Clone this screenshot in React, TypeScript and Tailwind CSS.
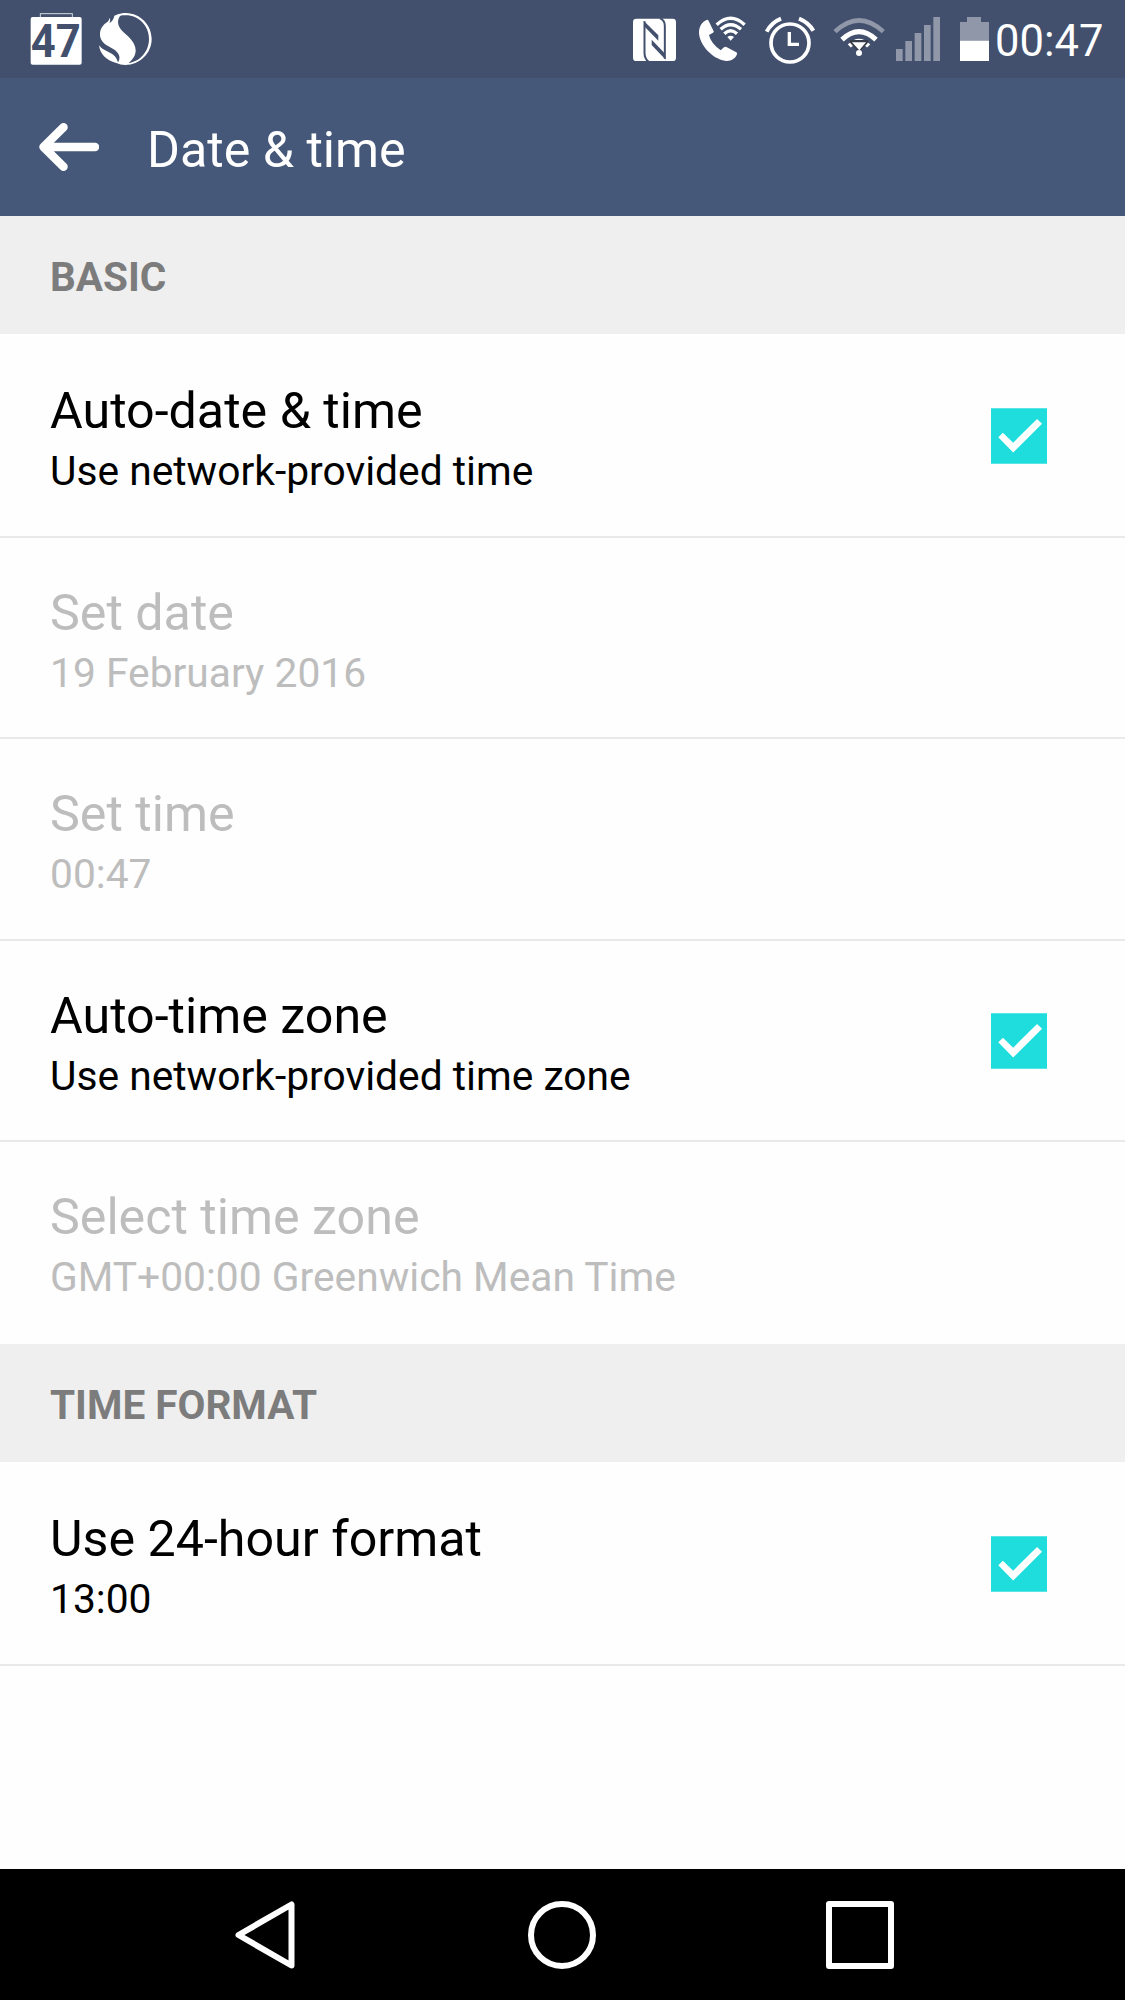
import type { ReactNode } from "react";

const FAINT = "#9097a9";
const BAR = "#42506d";

function Glyph({ x, w, className, children }: { x: number; w: number; className: string; children: ReactNode }) {
  return (
    <svg viewBox={`${x} 0 ${w} 234`} className={`h-[78px] shrink-0 ${className}`} fill="#fff">
      {children}
    </svg>
  );
}

function StatusBar() {
  return (
    <div className="flex h-[78px] items-center bg-[#42506d] pl-[28px]">
      <Glyph x={84} w={168} className="w-[56px]">
        <rect x="121" y="41" width="96" height="14" fill="none" stroke="#d5d9e1" strokeWidth="3" />
        <rect x="92" y="51" width="153" height="143" rx="6" />
        <text x="92" y="172" fontFamily="Roboto" fontWeight="700" fontSize="140" textLength="150" lengthAdjust="spacingAndGlyphs" fill={BAR}>
          47
        </text>
      </Glyph>
      <Glyph x={294} w={162} className="ml-[14px] w-[54px]">
        <path d="M343 47C358 40 370 39 378 39C421 40 455 75 455 117C455 160 419 195 376 195C365 195 358 193 349 189C317 181 300 161 297 136C313 158 346 155 354 187C363 172 357 163 350 155C337 141 313 139 303 118C295 96 304 78 319 68C325 64 328 58 329 53C332 61 330 66 328 70C335 65 342 57 343 47Z" />
        <path d="M360 48C348 66 356 83 370 96C390 113 407 131 407 151C407 168 397 180 386 189C419 185 447 155 447 117C447 77 415 46 378 46C370 46 365 46 360 48Z" fill={BAR} />
      </Glyph>
      <div className="grow" />
      <Glyph x={30} w={150} className="w-[50px]">
        <rect x="39" y="56" width="129" height="127" rx="10" />
        <path d="M73.500 64V158Q73.500 176 85 184M120 55Q134.500 60 134.500 78V176" fill="none" stroke={BAR} strokeWidth="6" />
        <path d="M71 62L115 106V122L74 80Z" fill={BAR} />
        <path d="M137 179L95 135V119L134 160Z" fill={BAR} />
      </Glyph>
      <Glyph x={222} w={168} className="ml-[14px] w-[56px]">
        <path d="M260 60Q264 58 266 63L281 94Q282 97 279 98L267 105Q272 129 302 151L312 142Q315 139 319 141L349 157Q352 159 351 163C345 179 328 185 315 182C275 176 239 134 237 99C237 79 247 64 260 60Z" />
        <g fill="none" stroke="#fff" strokeWidth="10">
          <path d="M290 74Q332 35 374 74" />
          <path d="M302 88Q332 60 363 88" />
          <path d="M313 101Q332 83 351 101" />
        </g>
        <path d="M322 111Q332 103 342 111L332 122Z" />
      </Glyph>
      <Glyph x={426} w={168} className="ml-3 w-[56px]">
        <g fill="none" stroke="#fff">
          <circle cx="510" cy="129" r="57" strokeWidth="11" />
          <path d="M508 96V133H537" strokeWidth="10" />
          <path d="M440 95Q454 68 483 56M537 56Q566 68 580 92" strokeWidth="12" />
        </g>
      </Glyph>
      <Glyph x={126} w={162} className="ml-[14px] w-[54px]">
        <path d="M135 95Q207 27 280 95" fill="none" stroke={FAINT} strokeWidth="14" />
        <path d="M156 119Q207 71 258 119" fill="none" stroke="#fff" strokeWidth="15" />
        <path d="M178 138Q207 108 236 138" fill="none" stroke="#fff" strokeWidth="13" />
        <path d="M180 120H234L236 126L215 149H199L178 126Z" fill="#363c49" />
        <path d="M186 127H228L208 151Z" />
        <circle cx="207" cy="159" r="9" />
      </Glyph>
      <Glyph x={315} w={138} className="ml-[9px] w-[46px]">
        <g fill={FAINT}>
          <rect x="318" y="147" width="20" height="36" />
          <rect x="346" y="123" width="20" height="60" />
          <rect x="374" y="99" width="20" height="84" />
          <rect x="402" y="75" width="20" height="108" />
          <rect x="430" y="51" width="20" height="132" />
        </g>
      </Glyph>
      <Glyph x={60} w={87} className="ml-[19px] w-[29px]">
        <path d="M60 66H81V51H123V66H147V122H60Z" fill={FAINT} />
        <rect x="60" y="122" width="87" height="61" />
      </Glyph>
      <span className="ml-[6px] mr-[22px] mt-[5px] w-[108px] whitespace-nowrap text-[43.5px] leading-[60px] text-white">00:47</span>
    </div>
  );
}

function Section({ children }: { children: ReactNode }) {
  return (
    <h2 className="flex h-[118.5px] items-center bg-[#efefef] pl-[50px] pt-[4px] text-[40.5px] font-bold leading-[60px] text-[#7c7c7c]">
      {children}
    </h2>
  );
}

function Check() {
  return (
    <svg viewBox="92 84 169 168" className="h-14 w-14 shrink-0">
      <path d="M92 84H261V252H92Z" fill="#20dddd" />
      <path d="M114 172L128 158L159 188L231 117L246 131L159 218Z" fill="#fff" />
    </svg>
  );
}

type RowProps = { title: string; detail: string; checked?: boolean; disabled?: boolean; last?: boolean };

function Row({ title, detail, checked, disabled, last }: RowProps) {
  return (
    <div
      className={`flex h-[201.6px] items-start justify-between pl-[50px] pr-[78px] pt-[45px] ${last ? "" : "border-b-2 border-[#e9e9e9]"} ${disabled ? "text-[#bdbdbd]" : "text-black"}`}
    >
      <div className="whitespace-nowrap">
        <div className="text-[50.2px] leading-[60px]">{title}</div>
        <div className="text-[40.75px] leading-[60px]">{detail}</div>
      </div>
      {checked && (
        <div className="mt-[27px]">
          <Check />
        </div>
      )}
    </div>
  );
}

export default function App() {
  return (
    <div className="flex h-[2000px] w-[1125px] flex-col overflow-hidden bg-[#fefefe] font-['Roboto',sans-serif]">
      <StatusBar />
      <header className="flex h-[137.5px] items-start bg-[#465879] pl-[38.5px]">
        <svg viewBox="0 0 60 48" className="mt-[45px] h-12 w-[60px]" fill="none" stroke="#fff" strokeWidth="8.5" strokeLinecap="round" strokeLinejoin="round">
          <path d="M24.5 4.3L4.5 24L24.5 43.8M5 24H56" />
        </svg>
        <h1 className="ml-[48.5px] mt-[41.5px] text-[50.2px] leading-[60px] text-white">Date &amp; time</h1>
      </header>
      <main className="grow">
        <Section>BASIC</Section>
        <div className="pt-[2px]">
          <Row title="Auto-date & time" detail="Use network-provided time" checked />
          <Row title="Set date" detail="19 February 2016" disabled />
          <Row title="Set time" detail="00:47" disabled />
          <Row title="Auto-time zone" detail="Use network-provided time zone" checked />
          <Row title="Select time zone" detail="GMT+00:00 Greenwich Mean Time" disabled last />
        </div>
        <Section>TIME FORMAT</Section>
        <div className="pt-[1.5px]">
          <Row title="Use 24-hour format" detail="13:00" checked />
        </div>
      </main>
      <nav className="flex h-[131.3px] items-start justify-between bg-black pl-[235px] pr-[231px] pt-[32px]">
        <svg viewBox="0 0 60 68" className="h-[68px] w-[60px]" fill="none" stroke="#fff" strokeWidth="6" strokeLinejoin="round">
          <path d="M56.5 3.5V64.5L3.5 34Z" />
        </svg>
        <div className="ml-[3px] h-[68px] w-[68px] rounded-full border-[6px] border-white" />
        <div className="h-[68px] w-[68px] rounded-[3px] border-[6px] border-white" />
      </nav>
    </div>
  );
}
